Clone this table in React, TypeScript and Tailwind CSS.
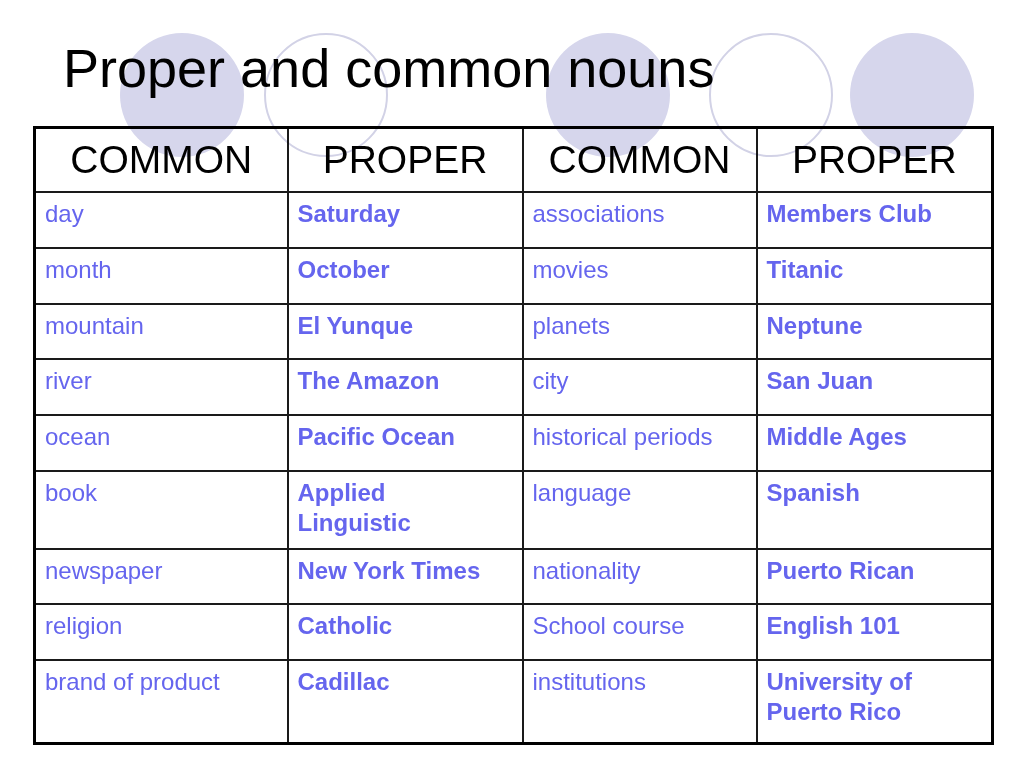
import React from 'react';

type Row = { c1: string; p1: string; c2: string; p2: string; h: string };

const rows: Row[] = [
  { c1: 'day', p1: 'Saturday', c2: 'associations', p2: 'Members Club', h: 'h-[56px]' },
  { c1: 'month', p1: 'October', c2: 'movies', p2: 'Titanic', h: 'h-[56px]' },
  { c1: 'mountain', p1: 'El Yunque', c2: 'planets', p2: 'Neptune', h: 'h-[55px]' },
  { c1: 'river', p1: 'The Amazon', c2: 'city', p2: 'San Juan', h: 'h-[56px]' },
  { c1: 'ocean', p1: 'Pacific Ocean', c2: 'historical periods', p2: 'Middle Ages', h: 'h-[56px]' },
  { c1: 'book', p1: 'Applied Linguistic', c2: 'language', p2: 'Spanish', h: 'h-[78px]' },
  { c1: 'newspaper', p1: 'New York Times', c2: 'nationality', p2: 'Puerto Rican', h: 'h-[55px]' },
  { c1: 'religion', p1: 'Catholic', c2: 'School course', p2: 'English 101', h: 'h-[56px]' },
  { c1: 'brand of product', p1: 'Cadillac', c2: 'institutions', p2: 'University of Puerto Rico', h: 'h-[84px]' },
];

const cell = 'border-2 border-[#1a1a1a] align-top pl-[9px] pr-[24px] pt-[6px] text-[24px] leading-[30px] text-[#6565ee]';
const head = 'border-2 border-[#1a1a1a] text-center align-middle text-[39px] leading-none text-black font-normal';

export default function App() {
  return (
    <div className="relative w-[1024px] h-[768px] bg-white overflow-hidden font-['Liberation_Sans',Arial,sans-serif]">
      <div className="pt-[41px] pl-[63px]">
        <h1 className="text-[54px] leading-none text-black">Proper and common nouns</h1>
      </div>

      <div className="mt-[31px] ml-[33px]">
        <table className="border-collapse border-[3px] border-black table-fixed w-[958px] bg-transparent">
          <colgroup>
            <col className="w-[253px]" />
            <col className="w-[235px]" />
            <col className="w-[234px]" />
            <col className="w-[236px]" />
          </colgroup>
          <thead>
            <tr className="h-[64px]">
              <th className={head}>COMMON</th>
              <th className={head}>PROPER</th>
              <th className={head}>COMMON</th>
              <th className={head}>PROPER</th>
            </tr>
          </thead>
          <tbody>
            {rows.map((r) => (
              <tr key={r.c1} className={r.h}>
                <td className={cell}>{r.c1}</td>
                <td className={cell + ' font-bold'}>{r.p1}</td>
                <td className={cell}>{r.c2}</td>
                <td className={cell + ' font-bold'}>{r.p2}</td>
              </tr>
            ))}
          </tbody>
        </table>
      </div>

      {/* decorative circles, multiplied over the title and header */}
      <div className="pointer-events-none absolute left-[120px] top-[33px] w-[124px] h-[124px] rounded-full bg-[#d6d6ec] mix-blend-multiply"></div>
      <div className="pointer-events-none absolute left-[264px] top-[33px] w-[124px] h-[124px] rounded-full border-2 border-[#d2d2e6] mix-blend-multiply"></div>
      <div className="pointer-events-none absolute left-[546px] top-[33px] w-[124px] h-[124px] rounded-full bg-[#d6d6ec] mix-blend-multiply"></div>
      <div className="pointer-events-none absolute left-[709px] top-[33px] w-[124px] h-[124px] rounded-full border-2 border-[#d2d2e6] mix-blend-multiply"></div>
      <div className="pointer-events-none absolute left-[850px] top-[33px] w-[124px] h-[124px] rounded-full bg-[#d6d6ec] mix-blend-multiply"></div>
    </div>
  );
}
